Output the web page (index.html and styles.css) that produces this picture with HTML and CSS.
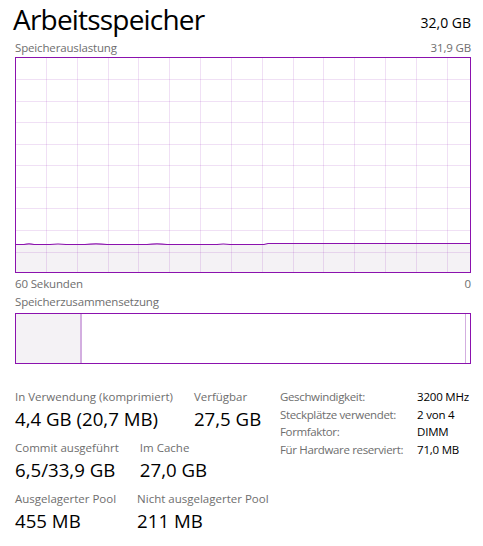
FILE: index.html
```html
<!DOCTYPE html>
<html lang="de">
<head>
<meta charset="utf-8">
<title>Arbeitsspeicher</title>
<link rel="stylesheet" href="styles.css">
</head>
<body>
<main class="page">
  <header class="head">
    <h1 class="title">Arbeitsspeicher</h1>
    <span class="total">32,0 GB</span>
  </header>
  <div class="caption-row"><span>Speicherauslastung</span><span>31,9 GB</span></div>
  <div class="graph">
    <svg class="graph-svg" width="454" height="214" viewBox="0 0 454 214">
      <path class="area" d="M0,186 L8,186 Q13,184.8 18,186 L34,186 Q42,185 50,186 L69,186 Q80,184.8 91,186 L131,186 Q141,184.8 151,186 L201,186 Q207,185 214,186 L248,186 L252,185 L454,185 L454,214 L0,214 Z"/>
      <g class="grid">
        <rect x="0" y="21" width="454" height="1"/>
        <rect x="0" y="43" width="454" height="1"/>
        <rect x="0" y="64" width="454" height="1"/>
        <rect x="0" y="86" width="454" height="1"/>
        <rect x="0" y="107" width="454" height="1"/>
        <rect x="0" y="129" width="454" height="1"/>
        <rect x="0" y="150" width="454" height="1"/>
        <rect x="0" y="172" width="454" height="1"/>
        <rect x="0" y="194" width="454" height="1"/>
        <rect x="30" y="0" width="1" height="214"/>
        <rect x="61" y="0" width="1" height="214"/>
        <rect x="92" y="0" width="1" height="214"/>
        <rect x="122" y="0" width="1" height="214"/>
        <rect x="153" y="0" width="1" height="214"/>
        <rect x="184" y="0" width="1" height="214"/>
        <rect x="215" y="0" width="1" height="214"/>
        <rect x="246" y="0" width="1" height="214"/>
        <rect x="277" y="0" width="1" height="214"/>
        <rect x="307" y="0" width="1" height="214"/>
        <rect x="338" y="0" width="1" height="214"/>
        <rect x="369" y="0" width="1" height="214"/>
        <rect x="400" y="0" width="1" height="214"/>
        <rect x="431" y="0" width="1" height="214"/>
      </g>
      <path class="line" d="M0,186.5 L8,186.5 Q13,185.3 18,186.5 L34,186.5 Q42,185.5 50,186.5 L69,186.5 Q80,185.3 91,186.5 L131,186.5 Q141,185.3 151,186.5 L201,186.5 Q207,185.5 214,186.5 L248,186.5 L252,185.5 L454,185.5"/>
    </svg>
  </div>
  <div class="caption-row axis"><span>60 Sekunden</span><span>0</span></div>
  <div class="caption-row comp-label"><span>Speicherzusammensetzung</span></div>
  <div class="composition">
    <div class="seg seg-inuse"></div>
    <div class="seg seg-standby"></div>
    <div class="seg seg-free"></div>
  </div>
  <section class="stats">
    <div class="stats-left">
      <div class="stat-row">
        <div class="stat"><div class="stat-label">In Verwendung (komprimiert)</div><div class="stat-value">4,4 GB (20,7 MB)</div></div>
        <div class="stat"><div class="stat-label">Verfügbar</div><div class="stat-value">27,5 GB</div></div>
      </div>
      <div class="stat-row">
        <div class="stat"><div class="stat-label">Commit ausgeführt</div><div class="stat-value">6,5/33,9 GB</div></div>
        <div class="stat"><div class="stat-label">Im Cache</div><div class="stat-value">27,0 GB</div></div>
      </div>
      <div class="stat-row">
        <div class="stat"><div class="stat-label">Ausgelagerter Pool</div><div class="stat-value">455 MB</div></div>
        <div class="stat"><div class="stat-label">Nicht ausgelagerter Pool</div><div class="stat-value">211 MB</div></div>
      </div>
    </div>
    <dl class="specs">
      <dt>Geschwindigkeit:</dt><dd>3200 MHz</dd>
      <dt>Steckplätze verwendet:</dt><dd>2 von 4</dd>
      <dt>Formfaktor:</dt><dd>DIMM</dd>
      <dt>Für Hardware reserviert:</dt><dd>71,0 MB</dd>
    </dl>
  </section>
</main>
</body>
</html>
```

FILE: styles.css
```css
* { box-sizing: border-box; }
html, body { margin: 0; padding: 0; background: #ffffff; }
body {
  font-family: "Open Sans", "Noto Sans", sans-serif;
  color: #000;
  width: 483px;
  height: 546px;
  overflow: hidden;
}
.page {
  padding: 0 12px 0 15px;
}
.head {
  display: flex;
  justify-content: space-between;
  align-items: flex-start;
  height: 40px;
}
.title {
  margin: 0 0 0 -2px;
  font-size: 28px;
  font-weight: 400;
  letter-spacing: -0.8px;
  line-height: 38px;
}
.total {
  font-size: 14px;
  line-height: 18px;
  padding-top: 14px;
}
.caption-row {
  display: flex;
  justify-content: space-between;
  font-size: 11.5px;
  letter-spacing: -0.15px;
  line-height: 16px;
  color: #6e6e6e;
}
.graph {
  margin-top: 1px;
  width: 456px;
  height: 216px;
  border: 1px solid #8b12ae;
  background: #fff;
}
.graph-svg { display: block; }
.area { fill: #f4f2f5; }
.grid rect { fill: rgba(139, 18, 174, 0.13); }
.line { fill: none; stroke: #8b12ae; stroke-width: 1.2; }
.axis { margin-top: 3px; }
.comp-label { margin-top: 2px; }
.composition {
  margin-top: 3px;
  width: 456px;
  height: 51px;
  border: 1px solid #8b12ae;
  display: flex;
}
.seg-inuse {
  width: 66px;
  background: #f4f2f5;
  border-right: 2px solid #d3aee0;
}
.seg-standby { flex: 1; }
.seg-free {
  width: 5px;
  border-left: 1px solid #d3aee0;
}
.stats {
  margin-top: 25px;
  display: flex;
  justify-content: space-between;
  align-items: flex-start;
}
.stat-row {
  display: flex;
  gap: 21px;
  margin-bottom: 7px;
}
.stat-label {
  font-size: 11.5px;
  line-height: 16px;
  color: #6e6e6e;
  white-space: nowrap;
}
.stat-value {
  font-size: 18.67px;
  line-height: 28px;
  white-space: nowrap;
}
.specs {
  margin: -1px 0 0 0;
  width: 191px;
  display: grid;
  grid-template-columns: 137px 1fr;
  font-size: 11.5px;
  line-height: 17.7px;
}
.specs dt { color: #6e6e6e; white-space: nowrap; letter-spacing: -0.35px; }
.specs dd { margin: 0; white-space: nowrap; letter-spacing: -0.2px; }
```
